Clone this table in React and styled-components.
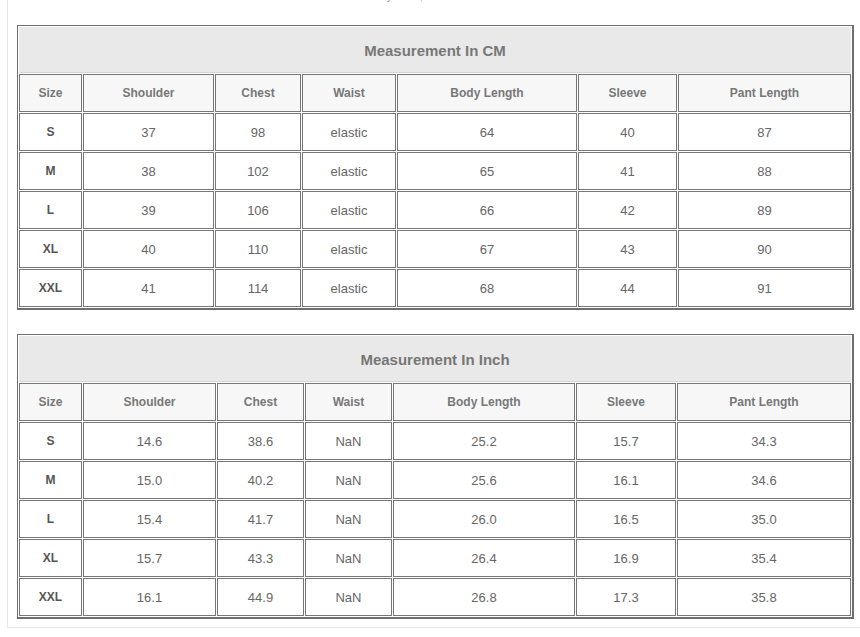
import React from "react";
import styled, { createGlobalStyle } from "styled-components";

const GlobalStyle = createGlobalStyle`
  html, body {
    margin: 0;
    padding: 0;
    background: #fff;
    overflow: hidden;
  }
  body {
    font-family: "Liberation Sans", Arial, sans-serif;
  }
`;

const Page = styled.div`
  width: 905px;
  margin-left: 7px;
  padding: 0 9px 8px 9px;
  border-left: 1px solid #e6e6e6;
  border-bottom: 1px solid #e6e6e6;
  box-sizing: border-box;
`;

const Note = styled.p`
  width: 837px;
  margin: -10px 0 22px 0;
  text-align: center;
  font-size: 11px;
  line-height: 13px;
  color: #9a9a9a;
`;

const Table = styled.table`
  table-layout: fixed;
  border-collapse: separate;
  border-spacing: 1px;
  border-style: solid;
  border-color: #6e6e6e;
  border-width: 1px 2px 2px 1px;
  margin-bottom: ${({ $gap }) => $gap || 0}px;
  color: #666;
  font-size: 13px;
`;

const TitleCell = styled.th`
  height: 46px;
  padding: 0;
  box-sizing: border-box;
  background: #e9e9e9;
  border: 1px solid #e9e9e9;
  border-bottom-color: #d4d4d4;
  font-size: 15px;
  font-weight: bold;
  color: #777;
  text-align: center;
`;

const HeadCell = styled.th`
  height: 38px;
  padding: 0;
  box-sizing: border-box;
  background: #f7f7f7;
  border: 1px solid #777;
  font-size: 12px;
  font-weight: bold;
  color: #777;
  text-align: center;
`;

const Cell = styled.td`
  height: 38px;
  padding: 0;
  box-sizing: border-box;
  background: #fff;
  border: 1px solid #777;
  text-align: center;
  color: ${({ $bold }) => ($bold ? "#555" : "#666")};
  font-size: ${({ $bold }) => ($bold ? "12px" : "13px")};
  font-weight: ${({ $bold }) => ($bold ? "bold" : "normal")};
`;

const headers = ["Size", "Shoulder", "Chest", "Waist", "Body Length", "Sleeve", "Pant Length"];

const cmRows = [
  ["S", "37", "98", "elastic", "64", "40", "87"],
  ["M", "38", "102", "elastic", "65", "41", "88"],
  ["L", "39", "106", "elastic", "66", "42", "89"],
  ["XL", "40", "110", "elastic", "67", "43", "90"],
  ["XXL", "41", "114", "elastic", "68", "44", "91"],
];

const inchRows = [
  ["S", "14.6", "38.6", "NaN", "25.2", "15.7", "34.3"],
  ["M", "15.0", "40.2", "NaN", "25.6", "16.1", "34.6"],
  ["L", "15.4", "41.7", "NaN", "26.0", "16.5", "35.0"],
  ["XL", "15.7", "43.3", "NaN", "26.4", "16.9", "35.4"],
  ["XXL", "16.1", "44.9", "NaN", "26.8", "17.3", "35.8"],
];

const SizeTable = ({ title, rows, cols, gap }) => (
  <Table $gap={gap}>
    <colgroup>
      {cols.map((w, i) => (
        <col key={i} style={{ width: w }} />
      ))}
    </colgroup>
    <thead>
      <tr>
        <TitleCell colSpan={7}>{title}</TitleCell>
      </tr>
      <tr>
        {headers.map((h) => (
          <HeadCell key={h}>{h}</HeadCell>
        ))}
      </tr>
    </thead>
    <tbody>
      {rows.map((r) => (
        <tr key={r[0]}>
          {r.map((v, i) => (
            <Cell key={i} $bold={i === 0}>
              {v}
            </Cell>
          ))}
        </tr>
      ))}
    </tbody>
  </Table>
);

export default function App() {
  return (
    <>
      <GlobalStyle />
      <Page>
        <Note>Item measured by hand, it could be 2cm-3cm different</Note>
        <SizeTable
          title="Measurement In CM"
          rows={cmRows}
          cols={[63, 131, 86, 94, 180, 99, 173]}
          gap={24}
        />
        <SizeTable
          title="Measurement In Inch"
          rows={inchRows}
          cols={[63, 133, 87, 87, 182, 100, 174]}
        />
      </Page>
    </>
  );
}
